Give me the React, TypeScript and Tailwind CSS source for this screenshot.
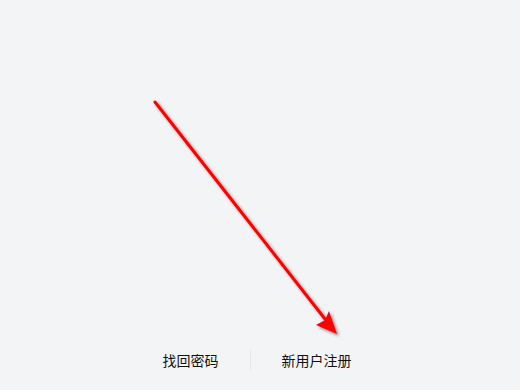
const App = () => {
  return (
    <div
      className="relative flex h-[390px] w-[520px] flex-col bg-[#f3f4f6]"
      style={{ fontFamily: '"Noto Sans CJK SC", "Liberation Sans", sans-serif' }}
    >
      <div className="flex-1" />

      {/* Bottom links */}
      <div className="mb-[20px] flex items-center justify-center pr-[6px] text-[14px] leading-[20px] text-[#111]">
        <a className="cursor-pointer">找回密码</a>
        <span className="mx-[31px] h-[20px] w-px bg-[#e3e5e8]" />
        <a className="cursor-pointer">新用户注册</a>
      </div>

      {/* Annotation arrow */}
      <svg className="pointer-events-none absolute inset-0" width="520" height="390">
        <defs>
          <filter id="shadow" x="-20%" y="-20%" width="140%" height="140%">
            <feDropShadow dx="2" dy="2" stdDeviation="1.6" floodColor="#000" floodOpacity="0.45" />
          </filter>
        </defs>
        <g filter="url(#shadow)">
          <line x1="155" y1="102" x2="325" y2="319" stroke="#ff0000" strokeWidth="3" strokeLinecap="round" />
          <polygon points="337,334 316,325 325,320 329,311" fill="#ff0000" />
        </g>
      </svg>
    </div>
  );
};

export default App;
